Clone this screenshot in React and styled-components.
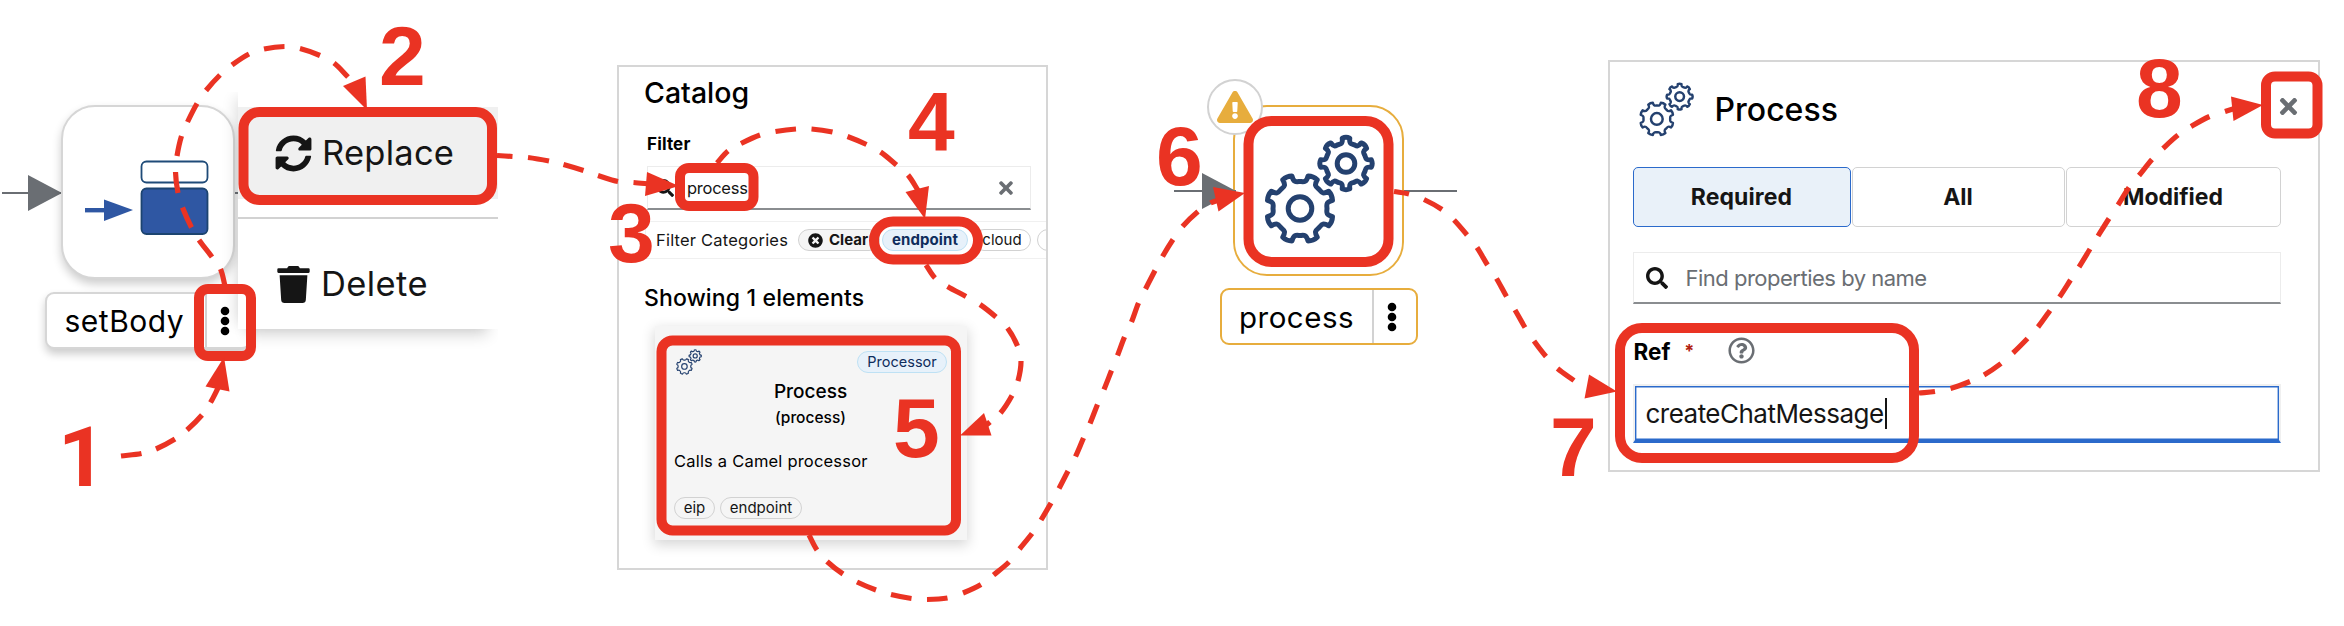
import React from "react";
import styled, { createGlobalStyle } from "styled-components";
import {
  FaSyncAlt,
  FaTrash,
  FaTimes,
  FaSearch,
  FaTimesCircle,
  FaExclamationTriangle,
  FaRegQuestionCircle,
} from "react-icons/fa";

const RED = "#ea3323";
const GRAY = "#6a6e73";
const BORDER = "#d6d6d6";
const AMBER = "#e7ad3d";

const GlobalStyle = createGlobalStyle`
  *, *::before, *::after { box-sizing: border-box; }
  body { margin: 0; background: #fff; font-family: Inter, "Liberation Sans", sans-serif; color: #151515; }
`;

const Canvas = styled.main`
  position: relative;
  width: 2344px;
  height: 626px;
  overflow: hidden;
  background: #fff;
`;

/* An item pinned on the free canvas of the walkthrough. */
const Pinned = styled.div`
  position: absolute;
  left: ${(p) => p.$x}px;
  top: ${(p) => p.$y}px;
`;

const Text = styled.span`
  display: block;
  white-space: nowrap;
  margin: ${(p) => p.$m || 0};
  font-size: ${(p) => p.$size}px;
  line-height: ${(p) => p.$line || p.$size}px;
  font-weight: ${(p) => p.$weight || 400};
  letter-spacing: ${(p) => p.$track || 0}px;
  color: ${(p) => p.$color || "#151515"};
`;

/* ---------- icons ---------- */

const polar = (cx, cy, r, deg) => {
  const a = ((deg - 90) * Math.PI) / 180;
  return `${(cx + r * Math.cos(a)).toFixed(2)} ${(cy + r * Math.sin(a)).toFixed(2)}`;
};

function gearPath(cx, cy, tip, root, half, phase) {
  let d = "";
  for (let k = 0; k < 8; k += 1) {
    const a = phase + k * 45;
    d += `${k ? "L" : "M"}${polar(cx, cy, tip, a - half)}`;
    d += `Q${polar(cx, cy, tip + 1.5, a)} ${polar(cx, cy, tip, a + half)}`;
    d += `C${polar(cx, cy, root - 0.5, a + half + 0.5)} ${polar(cx, cy, root, a + half + 5)} ${polar(cx, cy, root, a + 22.5)}`;
    d += `C${polar(cx, cy, root, a + 45 - half - 5)} ${polar(cx, cy, root - 0.5, a + 45 - half - 0.5)} ${polar(cx, cy, tip, a + 45 - half)}`;
  }
  return `${d}Z`;
}

function Gears({ size }) {
  return (
    <svg width={size} height={size} viewBox="0 0 111 111" fill="none" stroke="#24416f" strokeWidth="5" strokeLinejoin="round">
      <path d={gearPath(36, 74.5, 33.5, 27, 8.5, 22.5)} />
      <circle cx="36" cy="74.5" r="11.8" />
      <path d={gearPath(82, 29.5, 25.6, 20.5, 8.5, 0)} />
      <circle cx="82" cy="29.5" r="8.8" />
    </svg>
  );
}

function SetBodyIcon() {
  return (
    <svg width="126" height="76" viewBox="0 0 126 76">
      <rect x="58.5" y="1.5" width="66" height="21" rx="5" fill="#fff" stroke="#1f4b78" strokeWidth="1.8" />
      <rect x="58.5" y="28.5" width="66" height="45.5" rx="5" fill="#2f57a3" stroke="#1c4470" strokeWidth="1.8" />
      <rect x="2" y="48" width="20" height="4.4" fill="#2f57a3" />
      <path d="M21 39.5L50 50L21 61Z" fill="#2f57a3" />
    </svg>
  );
}

function Kebab() {
  return (
    <svg width="10" height="30" viewBox="0 0 10 30" fill="#000">
      <circle cx="5" cy="5" r="4.3" />
      <circle cx="5" cy="15" r="4.3" />
      <circle cx="5" cy="25" r="4.3" />
    </svg>
  );
}

const ConnectorSvg = styled.svg`
  display: block;
`;

function Connector({ length, head }) {
  return (
    <ConnectorSvg width={length} height="36" viewBox={`0 0 ${length} 36`}>
      <rect x="0" y="17" width={length} height="2" fill={GRAY} />
      {head && <path d={`M${length - 34} 0L${length} 18L${length - 34} 36Z`} fill={GRAY} />}
    </ConnectorSvg>
  );
}

/* ---------- canvas nodes ---------- */

const NodeCard = styled.div`
  width: ${(p) => p.$size}px;
  height: ${(p) => p.$size}px;
  border: 2px solid ${(p) => p.$border};
  border-radius: 34px;
  background: #fff;
  display: flex;
  padding: ${(p) => p.$pad};
  ${(p) => p.$raised && "box-shadow: 0 5px 10px rgba(0,0,0,.2);"}
`;

const NodeLabel = styled.div`
  display: flex;
  align-items: center;
  width: ${(p) => p.$w}px;
  height: 57px;
  padding-left: ${(p) => p.$pl}px;
  border: 2px solid ${(p) => p.$border};
  border-radius: 9px;
  background: #fff;
  ${(p) => p.$raised && "box-shadow: 0 5px 9px rgba(0,0,0,.2);"}
`;

const NodeMenuToggle = styled.div`
  display: flex;
  align-items: center;
  justify-content: center;
  margin-left: auto;
  width: 44px;
  height: 53px;
  padding: 1px 7px 0 0;
  border-left: 2px solid #d2d2d2;
`;

const WarningBadge = styled.div`
  display: flex;
  justify-content: center;
  width: 56px;
  height: 56px;
  padding-top: 8px;
  border: 2px solid #d2d2d2;
  border-radius: 50%;
  background: #fff;
  color: ${AMBER};
  font-size: 36px;
`;

const ContextMenu = styled.div`
  width: 260px;
  height: 237px;
  padding-top: 15px;
  background: #fff;
  box-shadow: -8px 0 14px -6px rgba(0, 0, 0, 0.14), 0 16px 14px -10px rgba(0, 0, 0, 0.16);
  clip-path: inset(0 0 -30px -20px);
`;

const MenuItem = styled.div`
  display: flex;
  align-items: center;
  gap: ${(p) => p.$gap}px;
  height: ${(p) => p.$h}px;
  padding-left: ${(p) => p.$pl}px;
  background: ${(p) => (p.$active ? "#f0f0f0" : "transparent")};
`;

const MenuDivider = styled.div`
  height: 2px;
  margin: 18px 0 0;
  background: #d2d2d2;
`;

/* ---------- catalog ---------- */

const Panel = styled.section`
  width: ${(p) => p.$w}px;
  height: ${(p) => p.$h}px;
  border: 2px solid ${BORDER};
  background: #fff;
  overflow: hidden;
`;

const CatalogBody = styled.div`
  display: flex;
  flex-direction: column;
  padding: 8px 0 0 26px;
`;

const CatalogSearch = styled.div`
  display: flex;
  align-items: center;
  gap: 13px;
  width: 384px;
  height: 44px;
  margin: 11.5px 0 0 2px;
  padding: 0 14px 0 8px;
  border: 1px solid #ececec;
  border-bottom: 2px solid #8a8d90;
`;

const ClearSearch = styled.div`
  display: flex;
  margin-left: auto;
  color: ${GRAY};
  font-size: 20px;
`;

const Toolbar = styled.div`
  display: flex;
  align-items: center;
  width: 430px;
  height: 38px;
  margin-top: 11px;
  padding-left: 10px;
  border: 1px solid #f0f0f0;
  border-right: 0;
  overflow: hidden;
`;

const ToolbarLabel = styled.div`
  flex: none;
  width: 142px;
`;

const Chip = styled.div`
  display: flex;
  flex: none;
  align-items: center;
  justify-content: ${(p) => (p.$start ? "flex-start" : "center")};
  gap: 6px;
  width: ${(p) => p.$w}px;
  height: 22px;
  padding-left: ${(p) => p.$pl || 0}px;
  margin-left: ${(p) => p.$ml || 0}px;
  border: 1px solid ${(p) => (p.$tone === "blue" ? "#bee1f4" : "#d2d2d2")};
  border-radius: 11px;
  background: ${(p) => (p.$tone === "blue" ? "#e7f1fa" : p.$tone === "gray" ? "#f5f5f5" : "transparent")};
`;

const ResultCard = styled.article`
  display: flex;
  flex-direction: column;
  width: 312px;
  height: 214px;
  margin: 13px 0 0 10px;
  padding: 23px 18px 0 19px;
  background: #f5f5f5;
  box-shadow: 0 4px 12px 1px rgba(0, 0, 0, 0.16);
`;

const CardTop = styled.div`
  display: flex;
  justify-content: space-between;
  align-items: flex-start;
  height: 30px;
  padding: 0 2px;
`;

const CardBadge = styled.div`
  padding-top: 2px;
`;

const CardTitles = styled.div`
  display: flex;
  flex-direction: column;
  align-items: center;
  width: 273px;
`;

const ChipRow = styled.div`
  display: flex;
  gap: 5px;
  margin-top: 25px;
`;

/* ---------- properties panel ---------- */

const FormBody = styled.div`
  padding: 20px 0 0 23px;
`;

const FormHeader = styled.header`
  display: flex;
  align-items: flex-start;
  height: 85px;
  padding-left: 6px;
`;

const CloseButton = styled.div`
  display: flex;
  margin: 12px 17px 0 auto;
  color: ${GRAY};
  font-size: 25px;
`;

const TabGroup = styled.div`
  display: flex;
  gap: 1px;
`;

const Tab = styled.div`
  display: flex;
  align-items: center;
  justify-content: center;
  width: ${(p) => p.$w}px;
  height: 60px;
  border: 1.5px solid ${(p) => (p.$active ? "#2b6acb" : "#d2d2d2")};
  border-radius: 5px;
  background: ${(p) => (p.$active ? "#e9f1f9" : "#fff")};
`;

const PropertySearch = styled.div`
  display: flex;
  align-items: center;
  gap: 18px;
  width: 648px;
  height: 52px;
  margin-top: 25px;
  padding: 2px 0 0 12px;
  border: 1px solid #ececec;
  border-bottom: 2px solid #8a8d90;
  font-size: 22px;
`;

const FieldLabel = styled.div`
  display: flex;
  align-items: center;
  height: 28px;
  margin: 34.5px 0 0 1px;
`;

const HelpIcon = styled(FaRegQuestionCircle)`
  margin: 0 0 3px 34px;
  font-size: 27px;
  color: ${GRAY};
`;

const FieldInput = styled.div`
  display: flex;
  align-items: center;
  width: 648px;
  height: 59px;
  margin-top: 17.5px;
  padding: 2px 0 0 11px;
  border: 2px solid #f0f0f0;
  border-bottom: 3px solid #2b6acb;
  box-shadow: inset 0 0 0 1.4px #2b6acb;
`;

const Caret = styled.div`
  width: 2px;
  height: 31px;
  margin-left: 1px;
  background: #151515;
`;

/* ---------- annotations ---------- */

const AnnotationLayer = styled.svg`
  position: absolute;
  left: 0;
  top: 0;
  z-index: 5;
  pointer-events: none;
`;

/* Roboto draws its 1 without a foot. */
const StepNumber = styled.text`
  font-family: ${(p) => (p.$plain ? "Roboto" : '"Liberation Sans"')}, Arial, sans-serif;
  font-weight: 700;
  font-size: 84px;
  fill: ${RED};
`;

/* x, y, width, height, corner radius of each highlight's centre line */
const highlights = [
  [243.5, 112, 248.5, 88, 16],
  [199, 289, 52, 67, 9],
  [680, 168, 73.5, 38, 9],
  [874, 221.5, 104, 38, 19],
  [661.5, 340.5, 294.5, 190, 11],
  [1248.5, 121, 140, 141, 23],
  [1620, 328, 294, 130, 22],
  [2266, 76.5, 51.5, 57, 9],
];

const numbers = [
  [58, 486], [379, 85], [608, 262], [908, 151],
  [893, 457], [1156, 185], [1550, 476], [2136, 117],
];

/* dash end points in pairs, followed by each arrow's head triangle */
const arrows = [
  {
    pts: [[121, 456], [141.5, 453.5], [156, 449], [175, 439], [187, 430], [202, 415], [210.5, 402.5], [219, 386]],
    head: "224,357 205.5,386.5 229.5,391.5",
  },
  {
    pts: [[225, 286], [220.5, 269], [212, 257], [199, 240], [191.5, 227.5], [182.5, 207.5], [178, 193], [175.5, 172], [177, 156], [181.5, 136], [187.5, 122], [197, 103.5], [206, 90.5], [220, 75], [232, 65], [249, 54], [264, 49], [284.5, 46.5], [300, 48.5], [320, 55.5], [334, 63], [348, 77]],
    head: "367,110 343,86 365.5,76.5",
  },
  {
    pts: [[497, 155.5], [512.5, 156.5], [528, 157.5], [549, 161], [563.5, 164.5], [583.5, 170.5], [598, 175.5], [618, 181.5], [633.5, 182.5], [650, 184]],
    head: "679,186 647,172 645,196",
  },
  {
    pts: [[717, 163], [728, 151], [741, 143.5], [760, 135], [775.5, 131.5], [796, 129], [811.5, 129], [832.5, 132], [847.5, 136.5], [866.5, 144.5], [880.5, 152], [896.5, 165], [908, 175], [919, 192]],
    head: "925,219 905.5,192 929,186",
  },
  {
    pts: [[926, 265], [935, 278], [947.5, 286.5], [966, 296.5], [980, 304.5], [996, 317], [1007.5, 328], [1017.5, 346], [1021, 361], [1018, 381], [1012, 395.5], [1000.5, 413], [990, 422], [985, 426]],
    head: "960,435.5 984,413 991.5,435.5",
  },
  {
    pts: [[809, 535], [817, 550], [827, 561.5], [843, 574], [857, 582], [876, 590], [891, 594.5], [911.5, 598.5], [927, 599.5], [947.5, 598], [963, 593], [981, 584.5], [993.5, 575], [1009, 562], [1019.5, 549], [1032, 533.5], [1041, 520], [1051, 503], [1059, 488.5], [1068, 471], [1075.5, 456.5], [1083.5, 438], [1090, 423.5], [1097.5, 404.5], [1104, 389.5], [1111.5, 370.5], [1117.5, 355.5], [1124.5, 337], [1131.5, 322], [1138.5, 303], [1145.5, 289], [1155, 270.5], [1162.5, 256.5], [1173, 239.5], [1182.5, 226.5], [1198, 211.5], [1210.5, 203], [1222, 199]],
    head: "1245,193 1213,187 1218.5,211.5",
  },
  {
    pts: [[1394, 191.5], [1409, 194], [1424, 199.5], [1442, 209.5], [1454, 220], [1467, 235], [1477, 247.5], [1487.5, 265], [1496.5, 278.5], [1506.5, 296.5], [1515, 310], [1525, 327.5], [1534, 341], [1546, 356.5], [1557.5, 368.5], [1574, 380.5]],
    head: "1617,391.5 1589,374.5 1584.5,398.5",
  },
  {
    pts: [[1919, 393], [1935, 391.5], [1950.5, 388.5], [1970, 381.5], [1984, 375], [2001, 363.5], [2013, 353], [2027.5, 338.5], [2038, 327], [2050, 310.5], [2059.5, 297], [2070.5, 280], [2079, 267], [2090, 249], [2098, 236], [2109, 218.5], [2118, 205], [2129, 187.5], [2139, 175.5], [2152, 159.5], [2163, 148.5], [2178, 135], [2191, 126.5], [2209.5, 116.5], [2225, 111.5], [2236, 108]],
    head: "2263,105 2231,96.5 2233.5,121",
  },
];

/* Smooth curve through all points, drawn only over every other span. */
function dashes(pts) {
  const tangent = (i) => {
    const a = pts[Math.max(i - 1, 0)];
    const b = pts[Math.min(i + 1, pts.length - 1)];
    const len = Math.hypot(b[0] - a[0], b[1] - a[1]);
    return [(b[0] - a[0]) / len, (b[1] - a[1]) / len];
  };
  let d = "";
  for (let i = 0; i + 1 < pts.length; i += 2) {
    const p = pts[i];
    const q = pts[i + 1];
    const l = Math.hypot(q[0] - p[0], q[1] - p[1]) / 3;
    const t = tangent(i);
    const u = tangent(i + 1);
    d += `M${p}C${p[0] + t[0] * l} ${p[1] + t[1] * l} ${q[0] - u[0] * l} ${q[1] - u[1] * l} ${q}`;
  }
  return d;
}

function Annotations() {
  return (
    <AnnotationLayer width="2344" height="626" viewBox="0 0 2344 626">
      {highlights.map(([x, y, w, h, r]) => (
        <rect key={x} x={x} y={y} width={w} height={h} rx={r} fill="none" stroke={RED} strokeWidth="10" />
      ))}
      {arrows.map((a) => (
        <g key={a.head}>
          <path d={dashes(a.pts)} fill="none" stroke={RED} strokeWidth="5.2" />
          <polygon points={a.head} fill={RED} />
        </g>
      ))}
      {numbers.map(([x, y], i) => (
        <StepNumber key={x} x={x} y={y} $plain={i === 0}>{i + 1}</StepNumber>
      ))}
    </AnnotationLayer>
  );
}

/* ---------- steps ---------- */

function SetBodyStep() {
  return (
    <>
      <Pinned $x={2} $y={174.5}><Connector length={60} head /></Pinned>
      <Pinned $x={61} $y={105}>
        <NodeCard $size={174} $border="#d6d6d6" $pad="53px 0 0 20px" $raised>
          <SetBodyIcon />
        </NodeCard>
      </Pinned>
      <Pinned $x={235} $y={174.5}><Connector length={5} /></Pinned>
      <Pinned $x={45} $y={292}>
        <NodeLabel $w={206} $pl={17.5} $border="#d6d6d6" $raised>
          <Text $size={30} $line={36} $track={0.5} $color="#000" $m="1px 0 0">setBody</Text>
          <NodeMenuToggle><Kebab /></NodeMenuToggle>
        </NodeLabel>
      </Pinned>
      <Pinned $x={238} $y={92}>
        <ContextMenu>
          <MenuItem $h={92} $gap={10} $pl={37} $active>
            <FaSyncAlt size={37} />
            <Text $size={34.5} $line={42} $track={0.25}>Replace</Text>
          </MenuItem>
          <MenuDivider />
          <MenuItem $h={130} $gap={11} $pl={39}>
            <FaTrash size={37} style={{ width: 33 }} />
            <Text $size={34.5} $line={42} $track={0.4}>Delete</Text>
          </MenuItem>
        </ContextMenu>
      </Pinned>
    </>
  );
}

function CatalogStep() {
  return (
    <Pinned $x={617} $y={65}>
      <Panel $w={431} $h={504.5}>
        <CatalogBody>
          <Text $size={28.5} $line={36} $weight={500} $color="#000" $m="0 0 0 -1px">Catalog</Text>
          <Text $size={17} $line={22} $weight={700} $track={0.15} $color="#000" $m="21.5px 0 0 2px">Filter</Text>
          <CatalogSearch>
            <FaSearch size={18} />
            <Text $size={16.5} $line={22} $track={-0.25}>process</Text>
            <ClearSearch><FaTimes /></ClearSearch>
          </CatalogSearch>
          <Toolbar>
            <ToolbarLabel>
              <Text $size={16.5} $line={22} $track={0.2}>Filter Categories</Text>
            </ToolbarLabel>
            <Chip $w={82} $pl={9} $tone="gray" $start>
              <FaTimesCircle size={15} />
              <Text $size={15} $line={20} $weight={700}>Clear</Text>
            </Chip>
            <Chip $w={86} $ml={2} $tone="blue">
              <Text $size={15} $line={20} $weight={700} $track={0.1} $color="#0f2d5c">endpoint</Text>
            </Chip>
            <Chip $w={58} $ml={5}>
              <Text $size={15} $line={20}>cloud</Text>
            </Chip>
            <Chip $w={60} $ml={6} />
          </Toolbar>
          <Text $size={23} $line={30} $weight={500} $track={0.15} $color="#000" $m="24px 0 0 -1px">Showing 1 elements</Text>
          <ResultCard>
            <CardTop>
              <Gears size={26} />
              <CardBadge>
                <Chip $w={90} $tone="blue"><Text $size={14.5} $line={20} $color="#0f2d5c">Processor</Text></Chip>
              </CardBadge>
            </CardTop>
            <CardTitles>
              <Text $size={19} $line={26} $weight={500} $color="#000">Process</Text>
              <Text $size={15.5} $line={26} $weight={500} $color="#000">(process)</Text>
            </CardTitles>
            <Text $size={16.5} $line={22} $track={0.2} $color="#000" $m="19px 0 0">Calls a Camel processor</Text>
            <ChipRow>
              <Chip $w={41}><Text $size={15} $line={20}>eip</Text></Chip>
              <Chip $w={82}><Text $size={15} $line={20}>endpoint</Text></Chip>
            </ChipRow>
          </ResultCard>
        </CatalogBody>
      </Panel>
    </Pinned>
  );
}

function ProcessNodeStep() {
  return (
    <>
      <Pinned $x={1404} $y={173}><Connector length={53} /></Pinned>
      <Pinned $x={1233} $y={105}>
        <NodeCard $size={171} $border={AMBER} $pad="27px 0 0 29px"><Gears size={111} /></NodeCard>
      </Pinned>
      <Pinned $x={1174} $y={173}><Connector length={62} head /></Pinned>
      <Pinned $x={1206.5} $y={78.5}>
        <WarningBadge><FaExclamationTriangle /></WarningBadge>
      </Pinned>
      <Pinned $x={1220} $y={287.5}>
        <NodeLabel $w={198} $pl={17} $border={AMBER}>
          <Text $size={29.5} $line={36} $track={0.5} $color="#000" $m="1px 0 0">process</Text>
          <NodeMenuToggle><Kebab /></NodeMenuToggle>
        </NodeLabel>
      </Pinned>
    </>
  );
}

function PropertiesStep() {
  return (
    <Pinned $x={1607.5} $y={59.5}>
      <Panel $w={712} $h={412.5}>
        <FormBody>
          <FormHeader>
            <Gears size={55} />
            <Text $size={32} $line={40} $weight={500} $color="#000" $m="8px 0 0 21px">Process</Text>
            <CloseButton><FaTimes /></CloseButton>
          </FormHeader>
          <TabGroup>
            <Tab $w={218} $active><Text $size={23} $line={30} $weight={700} $track={0.1}>Required</Text></Tab>
            <Tab $w={213}><Text $size={23} $line={30} $weight={700}>All</Text></Tab>
            <Tab $w={215}><Text $size={23} $line={30} $weight={700}>Modified</Text></Tab>
          </TabGroup>
          <PropertySearch>
            <FaSearch />
            <Text $size={22} $line={30} $track={-0.5} $color={GRAY}>Find properties by name</Text>
          </PropertySearch>
          <FieldLabel>
            <Text $size={22.5} $line={28} $weight={700} $color="#000">Ref</Text>
            <Text $size={18} $line={24} $color="#b1200f" $weight={700} $m="0 0 3px 14px">*</Text>
            <HelpIcon />
          </FieldLabel>
          <FieldInput>
            <Text $size={26} $line={34} $track={-0.52}>createChatMessage</Text>
            <Caret />
          </FieldInput>
        </FormBody>
      </Panel>
    </Pinned>
  );
}

export default function App() {
  return (
    <Canvas>
      <GlobalStyle />
      <SetBodyStep />
      <CatalogStep />
      <ProcessNodeStep />
      <PropertiesStep />
      <Annotations />
    </Canvas>
  );
}
